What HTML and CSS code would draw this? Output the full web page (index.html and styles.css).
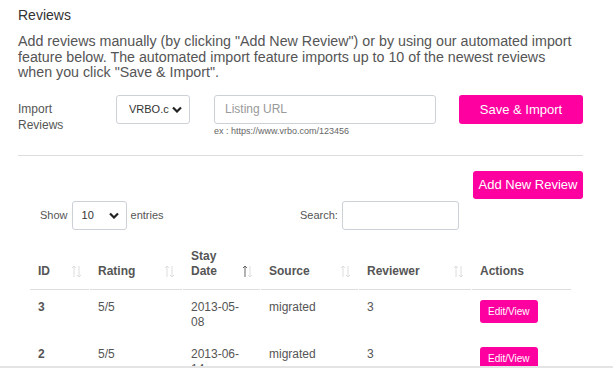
FILE: index.html
```html
<!DOCTYPE html>
<html lang="en">
<head>
    <meta charset="UTF-8">
    <meta name="viewport" content="width=device-width, initial-scale=1.0">
    <title>Reviews</title>
    <link rel="stylesheet" href="styles.css">
</head>
<body>
    <div class="container">
        <h2 class="title">Reviews</h2>
        <p class="intro">Add reviews manually (by clicking "Add New Review") or by using our automated import feature below. The automated import feature imports up to 10 of the newest reviews when you click "Save &amp; Import".</p>

        <div class="import-row">
            <label class="import-label" for="source">Import<br>Reviews</label>
            <div class="select-wrap source-select">
                <select id="source">
                    <option>VRBO.com</option>
                    <option>Airbnb.com</option>
                </select>
                <svg class="chevron" width="10" height="7" viewBox="0 0 10 7"><path d="M1 1.5 L5 5.5 L9 1.5" fill="none" stroke="#222" stroke-width="2.2"/></svg>
            </div>
            <div class="url-group">
                <input type="text" class="url-input" placeholder="Listing URL">
                <div class="help">ex : https://www.vrbo.com/123456</div>
            </div>
            <button class="btn-pink btn-import">Save &amp; Import</button>
        </div>

        <hr class="divider">

        <div class="add-row">
            <button class="btn-pink btn-add">Add New Review</button>
        </div>

        <div class="table-wrap">
            <div class="table-controls">
                <div class="length">
                    Show
                    <div class="select-wrap length-select">
                        <select>
                            <option>10</option>
                            <option>25</option>
                            <option>50</option>
                        </select>
                        <svg class="chevron" width="10" height="7" viewBox="0 0 10 7"><path d="M1 1.5 L5 5.5 L9 1.5" fill="none" stroke="#222" stroke-width="2.2"/></svg>
                    </div>
                    entries
                </div>
                <div class="filter">
                    Search: <input type="search" class="search-input">
                </div>
            </div>

            <table class="reviews">
                <colgroup>
                    <col style="width:59px">
                    <col style="width:92px">
                    <col style="width:77px">
                    <col style="width:97px">
                    <col style="width:112px">
                    <col style="width:99px">
                </colgroup>
                <thead>
                    <tr>
                        <th><div class="th-inner"><span>ID</span><svg class="sort" width="11" height="13" viewBox="0 0 11 13"><path d="M3 12V1M1 3l2-2 2 2" stroke="#ddd" fill="none"/><path d="M8 1v11M6 10l2 2 2-2" stroke="#ddd" fill="none"/></svg></div></th>
                        <th><div class="th-inner"><span>Rating</span><svg class="sort" width="11" height="13" viewBox="0 0 11 13"><path d="M3 12V1M1 3l2-2 2 2" stroke="#ddd" fill="none"/><path d="M8 1v11M6 10l2 2 2-2" stroke="#ddd" fill="none"/></svg></div></th>
                        <th><div class="th-inner"><span>Stay<br>Date</span><svg class="sort" width="11" height="13" viewBox="0 0 11 13"><path d="M3 12V1M1 3l2-2 2 2" stroke="#666" fill="none"/><path d="M8 1v11M6 10l2 2 2-2" stroke="#ddd" fill="none"/></svg></div></th>
                        <th><div class="th-inner"><span>Source</span><svg class="sort" width="11" height="13" viewBox="0 0 11 13"><path d="M3 12V1M1 3l2-2 2 2" stroke="#ddd" fill="none"/><path d="M8 1v11M6 10l2 2 2-2" stroke="#ddd" fill="none"/></svg></div></th>
                        <th><div class="th-inner"><span>Reviewer</span><svg class="sort" width="11" height="13" viewBox="0 0 11 13"><path d="M3 12V1M1 3l2-2 2 2" stroke="#ddd" fill="none"/><path d="M8 1v11M6 10l2 2 2-2" stroke="#ddd" fill="none"/></svg></div></th>
                        <th><div class="th-inner"><span>Actions</span></div></th>
                    </tr>
                </thead>
                <tbody>
                    <tr>
                        <td class="id">3</td>
                        <td>5/5</td>
                        <td>2013-05-08</td>
                        <td>migrated</td>
                        <td>3</td>
                        <td><button class="btn-pink btn-edit">Edit/View</button></td>
                    </tr>
                    <tr>
                        <td class="id">2</td>
                        <td>5/5</td>
                        <td>2013-06-14</td>
                        <td>migrated</td>
                        <td>3</td>
                        <td><button class="btn-pink btn-edit">Edit/View</button></td>
                    </tr>
                </tbody>
            </table>
        </div>
    </div>
    <div class="scroll-edge"></div>
</body>
</html>
```

FILE: styles.css
```css
* {
    margin: 0;
    padding: 0;
    box-sizing: border-box;
}

body {
    font-family: 'Liberation Sans', Arial, sans-serif;
    color: #555;
    background: white;
    overflow: hidden;
}

.container {
    width: 583px;
    padding: 7px 0 0 18px;
}

.title {
    font-size: 14px;
    font-weight: normal;
    line-height: 16px;
    color: #333;
}

.intro {
    width: 560px;
    margin-top: 11px;
    font-size: 14.25px;
    line-height: 15.5px;
    color: #555;
}

.import-row {
    display: flex;
    align-items: flex-start;
    margin-top: 14px;
}

.import-label {
    width: 98px;
    padding-top: 6px;
    font-size: 12px;
    line-height: 16px;
    color: #555;
}

.select-wrap {
    position: relative;
}

.select-wrap select {
    appearance: none;
    -webkit-appearance: none;
    width: 100%;
    height: 29px;
    border: 1px solid #ccd1d7;
    border-radius: 3px;
    background: white;
    font-family: inherit;
    font-size: 11px;
    color: #333;
    padding: 0 20px 0 12px;
}

.select-wrap .chevron {
    position: absolute;
    top: 11px;
    right: 8px;
    pointer-events: none;
}

.source-select {
    width: 74px;
}

.url-group {
    margin-left: 24px;
    width: 222px;
}

.url-input {
    width: 100%;
    height: 29px;
    border: 1px solid #ccd1d7;
    border-radius: 3px;
    padding: 0 10px;
    font-family: inherit;
    font-size: 12px;
}

.url-input::placeholder {
    color: #999;
}

.help {
    margin-top: 1px;
    font-size: 9px;
    line-height: 12px;
    color: #666;
}

.btn-pink {
    background: #ff00a0;
    color: white;
    border: none;
    border-radius: 3px;
    font-family: inherit;
    cursor: pointer;
}

.btn-import {
    margin-left: 23px;
    width: 124px;
    height: 29px;
    font-size: 13px;
}

.divider {
    border: none;
    border-top: 1px solid #ddd;
    margin-top: 18px;
    width: 565px;
}

.add-row {
    display: flex;
    justify-content: flex-end;
    width: 565px;
    margin-top: 15px;
}

.btn-add {
    width: 110px;
    height: 28px;
    font-size: 13px;
}

.table-wrap {
    margin-left: 11px;
    width: 543px;
    margin-top: 2px;
}

.table-controls {
    display: grid;
    grid-template-columns: 271px 1fr;
    font-size: 11px;
    color: #555;
}

.length,
.filter {
    display: flex;
    align-items: center;
    gap: 4px;
}

.length {
    padding-left: 11px;
}

.length-select {
    width: 55px;
}

.length-select select {
    padding-left: 9px;
}

.search-input {
    width: 117px;
    height: 29px;
    border: 1px solid #ccd1d7;
    border-radius: 3px;
}

.reviews {
    margin-top: 11px;
    border-collapse: separate;
    border-spacing: 1px 0;
    table-layout: fixed;
    width: 543px;
    font-size: 12px;
    line-height: 15px;
    color: #555;
}

.reviews th {
    text-align: left;
    font-weight: bold;
    color: #555;
    padding: 8px 7px 10px 8px;
    border-bottom: 1px solid #ddd;
    vertical-align: bottom;
}

.th-inner {
    display: flex;
    justify-content: space-between;
    align-items: flex-end;
}

.th-inner .sort {
    margin-bottom: 1px;
}

.reviews td {
    padding: 10px 8px 7px 8px;
    vertical-align: top;
}

.reviews td.id {
    font-weight: bold;
}

.btn-edit {
    font-size: 10px;
    line-height: 13px;
    padding: 5px 8px;
}

.scroll-edge {
    position: fixed;
    left: 0;
    right: 0;
    bottom: 0;
    height: 2px;
    background: #e4e4e4;
}
```
